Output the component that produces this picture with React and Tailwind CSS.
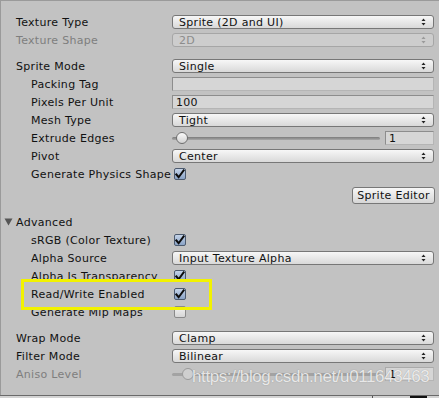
import React from "react";

const font = { fontFamily: '"DejaVu Sans", Verdana, sans-serif' };

function Arrows({ disabled }) {
    const c = disabled ? "#9a9a9a" : "#222";
    return (
        <svg width="5" height="8" viewBox="0 0 5 8" className="absolute right-[7px] top-1/2 -translate-y-1/2">
            <path d="M2.5 0.5 L4.5 3 L0.5 3 Z" fill={c} />
            <path d="M2.5 7.5 L4.5 5 L0.5 5 Z" fill={c} />
        </svg>
    );
}

function Dropdown({ value, disabled }) {
    return (
        <div
            className={`relative flex h-[14px] w-full items-center rounded-[3px] border pl-[6px] leading-none ${disabled ? "border-[#a6a6a6] bg-[#cdcdcd] text-[#8c8c8c]" : "border-[#777] bg-gradient-to-b from-[#f7f7f7] to-[#d9d9d9] text-[#111]"}`}
        >
            <span className="text-[11px] tracking-[0.3px]">{value}</span>
            <Arrows disabled={disabled} />
        </div>
    );
}

function Field({ value, className = "" }) {
    return (
        <div className={`flex h-[14px] items-center border border-[#8d8d8d] border-b-[#b5b5b5] border-r-[#b5b5b5] bg-[#d6d6d6] pl-[3px] text-[11px] leading-none tracking-[0.3px] text-[#111] ${className}`}>
            {value}
        </div>
    );
}

function Checkbox({ checked }) {
    return (
        <div
            className={`flex h-[12px] w-[12px] items-center justify-center rounded-[2px] border ${checked ? "border-[#4c5a6e] bg-gradient-to-b from-[#c4d3e8] to-[#8aa3c6]" : "border-[#8a8a8a] bg-gradient-to-b from-[#f2f2f2] to-[#d6d6d6]"}`}
        >
            {checked && (
                <svg width="11" height="11" viewBox="0 0 11 11">
                    <path d="M1.5 5.5 L4 8.5 L9.5 1" fill="none" stroke="#0c0c0c" strokeWidth="2.2" strokeLinecap="square" />
                </svg>
            )}
        </div>
    );
}

function Slider({ disabled, pos = 10 }) {
    return (
        <div className="flex w-full items-center gap-[5px]">
            <div className="relative h-[14px] flex-1">
                <div className={`absolute left-0 right-0 top-[6px] h-[3px] rounded-full ${disabled ? "bg-[#a3a3a3]" : "bg-gradient-to-b from-[#7c7c7c] to-[#a8a8a8]"}`} />
                <div
                    className={`absolute top-[1px] h-[12px] w-[12px] -translate-x-1/2 rounded-full border ${disabled ? "border-[#9a9a9a] bg-[#cfcfcf]" : "border-[#6f6f6f] bg-gradient-to-b from-[#fafafa] to-[#d2d2d2]"}`}
                    style={{ left: pos }}
                />
            </div>
            <Field value="1" className={`w-[49px] ${disabled ? "text-[#9a9a9a] border-[#aaa] bg-[#cbcbcb]" : ""}`} />
        </div>
    );
}

function Row({ label, indent, disabled, children }) {
    return (
        <div className="flex h-[18px] items-center">
            <div
                className={`w-[171px] shrink-0 whitespace-nowrap text-[11px] leading-none tracking-[0.3px] ${indent ? "pl-[30px]" : "pl-[15px]"} ${disabled ? "text-[#7e7e7e]" : "text-[#111]"}`}
            >
                {label}
            </div>
            <div className="flex flex-1 items-center pr-[5px]">{children}</div>
        </div>
    );
}

export default function App() {
    return (
        <div className="relative h-[398px] w-[439px] overflow-hidden bg-[#c2c2c2]" style={font}>
            <div className="h-full border-l border-t border-[#9a9a9a] pt-[12px]">
                <Row label="Texture Type"><Dropdown value="Sprite (2D and UI)" /></Row>
                <Row label="Texture Shape" disabled><Dropdown value="2D" disabled /></Row>

                <div className="mt-[8px]">
                    <Row label="Sprite Mode"><Dropdown value="Single" /></Row>
                    <Row label="Packing Tag" indent><Field value="" className="w-full" /></Row>
                    <Row label="Pixels Per Unit" indent><Field value="100" className="w-full" /></Row>
                    <Row label="Mesh Type" indent><Dropdown value="Tight" /></Row>
                    <Row label="Extrude Edges" indent><Slider pos={10} /></Row>
                    <Row label="Pivot" indent><Dropdown value="Center" /></Row>
                    <Row label="Generate Physics Shape" indent>
                        <div className="pl-[2px]"><Checkbox checked /></div>
                    </Row>
                </div>

                <div className="flex justify-end pr-[4px] pt-[4px]">
                    <button className="h-[17px] w-[83px] rounded-[3px] border border-[#777] bg-gradient-to-b from-[#f7f7f7] to-[#d6d6d6] text-[11px] leading-none tracking-[0.3px] text-[#111]">
                        Sprite Editor
                    </button>
                </div>

                <div className="mt-[9px] flex h-[18px] items-center text-[11px] leading-none tracking-[0.3px] text-[#111]">
                    <svg width="9" height="8" viewBox="0 0 9 8" className="ml-[3px] mr-[3px]">
                        <path d="M0.5 0.5 L8.5 0.5 L4.5 7.5 Z" fill="#555" />
                    </svg>
                    Advanced
                </div>
                <Row label="sRGB (Color Texture)" indent><div className="pl-[2px]"><Checkbox checked /></div></Row>
                <Row label="Alpha Source" indent><Dropdown value="Input Texture Alpha" /></Row>
                <Row label="Alpha Is Transparency" indent><div className="pl-[2px]"><Checkbox checked /></div></Row>
                <Row label="Read/Write Enabled" indent><div className="pl-[2px]"><Checkbox checked /></div></Row>
                <Row label="Generate Mip Maps" indent><div className="pl-[2px]"><Checkbox /></div></Row>

                <div className="mt-[8px]">
                    <Row label="Wrap Mode"><Dropdown value="Clamp" /></Row>
                    <Row label="Filter Mode"><Dropdown value="Bilinear" /></Row>
                    <Row label="Aniso Level" disabled><Slider disabled pos={16} /></Row>
                </div>
            </div>

            {/* highlight box */}
            <div className="absolute left-[21px] top-[279px] h-[31px] w-[191px] border-[3px] border-[#f2f200]" />

            {/* watermark */}
            <div
                className="absolute left-[192px] top-[368px] text-[17px] leading-none tracking-[-0.4px] text-white/80"
                style={{ fontFamily: '"Liberation Sans", Arial, sans-serif', textShadow: "0 0 1px rgba(90,90,90,0.6)" }}
            >
                https://blog.csdn.net/u011643463
            </div>

            {/* bottom edge */}
            <div className="absolute bottom-0 left-0 right-0 h-[3px] border-t border-[#6a6a6a] bg-[#d3d3d3]">
                <div className="absolute left-[372px] top-0 h-[2px] w-[1px] bg-[#555]" />
                <div className="absolute left-[410px] top-0 h-[2px] w-[17px] bg-[#111]" />
            </div>
        </div>
    );
}
